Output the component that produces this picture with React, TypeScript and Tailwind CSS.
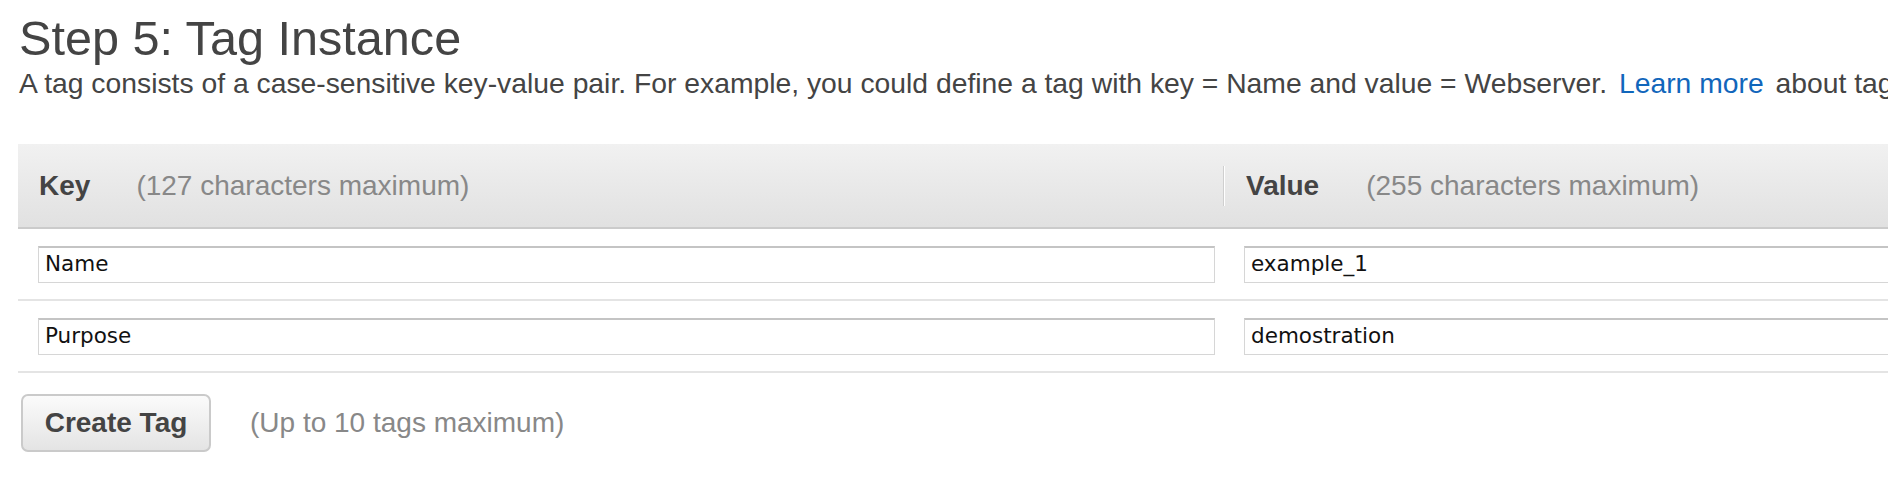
import React from 'react'

const sans = "font-['Liberation_Sans',Arial,sans-serif]"

function TagInput({ value }: { value: string }) {
  return (
    <div className="h-[37px] w-full border border-[#d6d6d6] border-t-2 border-t-[#c4c4c4] bg-white pl-[6px] flex items-center font-['DejaVu_Sans',sans-serif] text-[21.5px] text-[#111] whitespace-nowrap overflow-hidden">
      {value}
    </div>
  )
}

function TagRow({ k, v }: { k: string; v: string }) {
  return (
    <div className="flex h-[72px] items-center border-b-2 border-[#e4e4e4]">
      <div className="w-[1206px] shrink-0 pl-[20px] pr-[9px]">
        <TagInput value={k} />
      </div>
      <div className="flex-1 pl-[20px]">
        <TagInput value={v} />
      </div>
    </div>
  )
}

export default function App() {
  const tags = [
    { k: 'Name', v: 'example_1' },
    { k: 'Purpose', v: 'demostration' },
  ]

  return (
    <div className={`w-[1888px] h-[500px] overflow-hidden bg-white ${sans}`}>
      <div className="w-[2400px]">
        {/* Heading */}
        <div className="pl-[19px] pt-[11px]">
          <h1 className="text-[48.6px] leading-[54px] text-[#444]">Step 5: Tag Instance</h1>
          <p className="mt-[2px] text-[28.3px] leading-[32px] text-[#444] whitespace-nowrap">
            A tag consists of a case-sensitive key-value pair. For example, you could define a tag with key = Name and value = Webserver.{' '}
            <a className="text-[#1166bb] mx-[4px]">Learn more</a> about tagging your Amazon EC2 resources.
          </p>
        </div>

        {/* Tag table */}
        <div className="ml-[18px] mt-[45px]">
          <div className="flex h-[85px] items-center bg-gradient-to-b from-[#f1f1f1] to-[#e1e1e1] border-b-2 border-[#cbcbcb]">
            <div className="w-[1205px] shrink-0 pl-[21px] flex items-center text-[28px]">
              <span className="font-bold text-[#444]">Key</span>
              <span className="ml-[46px] text-[#888]">(127 characters maximum)</span>
            </div>
            <div className="w-[2px] h-[40px] bg-[#cfcfcf] border-r border-white shrink-0" />
            <div className="flex-1 pl-[21px] flex items-center text-[28px]">
              <span className="font-bold text-[#444]">Value</span>
              <span className="ml-[47px] text-[#888]">(255 characters maximum)</span>
            </div>
          </div>
          {tags.map(t => (
            <TagRow key={t.k} k={t.k} v={t.v} />
          ))}
        </div>

        {/* Actions */}
        <div className="flex items-center pl-[21px] mt-[21px]">
          <button className="h-[58px] w-[190px] rounded-[7px] border-2 border-[#cacaca] bg-gradient-to-b from-[#fbfbfb] to-[#e4e4e4] text-[28px] font-bold text-[#444]">
            Create Tag
          </button>
          <span className="ml-[39px] text-[28px] text-[#888]">(Up to 10 tags maximum)</span>
        </div>
      </div>
    </div>
  )
}
